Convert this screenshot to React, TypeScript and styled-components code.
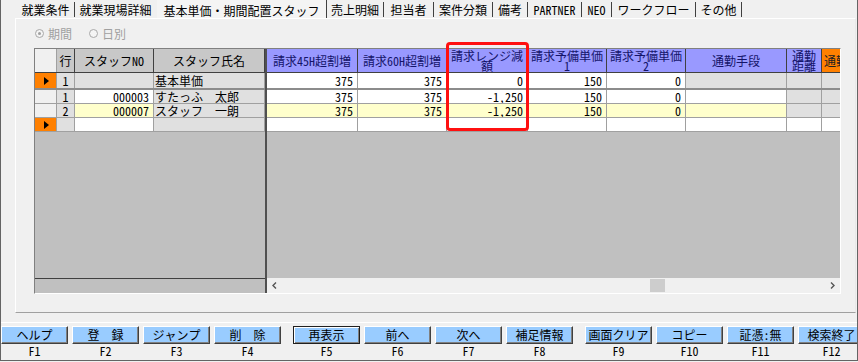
import React from 'react';
import styled, { createGlobalStyle } from 'styled-components';

const FONT = `"Noto Sans Mono CJK JP", "Noto Sans CJK JP", "DejaVu Sans Mono", monospace`;

const GRAY_H = '#c8c8c8';
const GRAY_C = '#e0e0e0';
const BLUE_H = '#9999ff';
const ORANGE = '#ff8000';
const YELLOW = '#ffffcc';
const WHITE = '#ffffff';

const GlobalStyle = createGlobalStyle`
  html, body { margin: 0; padding: 0; background: #f0f0f0; }
  body { font-family: ${FONT}; font-size: 12px; color: #000; }
  *, *::before, *::after { box-sizing: border-box; }
`;

const Window = styled.div`
  width: 858px;
  height: 361px;
  background: #f0f0f0;
  border: 1px solid #646464;
  border-top: none;
  display: flex;
  flex-direction: column;
  overflow: hidden;
`;

const TabStrip = styled.div`
  flex: none;
  height: 18px;
  display: flex;
  align-items: flex-end;
  padding-left: 16px;
`;

const Tab = styled.div<{ $w: number; $active?: boolean; $noBar?: boolean }>`
  flex: none;
  width: ${(p) => p.$w}px;
  height: ${(p) => (p.$active ? 18 : 15)}px;
  padding-top: ${(p) => (p.$active ? 3 : 0)}px;
  line-height: 15px;
  text-align: center;
  white-space: nowrap;
  border-right: 1px solid ${(p) => (p.$noBar ? 'transparent' : '#404040')};
  background: ${(p) => (p.$active ? '#f4f4f4' : 'transparent')};
  margin-bottom: ${(p) => (p.$active ? 0 : 1)}px;
`;

const Panel = styled.div`
  flex: none;
  height: 295px;
  margin: 0 1px 0 14px;
  border-top: 1px solid #ffffff;
  border-left: 1px solid #ffffff;
  border-right: 1px solid #e8e8e8;
  border-bottom: 1px solid #a0a0a0;
  padding: 8px 0 0 18px;
  display: flex;
  flex-direction: column;
`;

const RadioRow = styled.div`
  flex: none;
  height: 13px;
  margin-left: 1px;
  display: flex;
  align-items: center;
  gap: 17px;
  color: #a0a0a0;
  line-height: 13px;
`;

const RadioItem = styled.div`
  display: flex;
  align-items: center;
  gap: 4px;
`;

const RadioCircle = styled.span<{ $checked?: boolean }>`
  width: 9px;
  height: 9px;
  border-radius: 50%;
  border: 1px solid #a8a8a8;
  background: #f4f4f4;
  display: flex;
  align-items: center;
  justify-content: center;
  &::after {
    content: '';
    width: 3px;
    height: 3px;
    border-radius: 50%;
    background: ${(p) => (p.$checked ? '#a0a0a0' : 'transparent')};
  }
`;

const GridFrame = styled.div`
  flex: none;
  position: relative;
  margin-top: 8px;
  width: 807px;
  height: 246px;
  border: 1px solid;
  border-color: #808080 #ffffff #ffffff #808080;
  display: flex;
`;

const FrozenPane = styled.div`
  flex: none;
  width: 232px;
  border-right: 2px solid #505050;
  display: flex;
  flex-direction: column;
`;

const ScrollPane = styled.div`
  flex: 1;
  min-width: 0;
  overflow: hidden;
  display: flex;
  flex-direction: column;
`;

const HeaderRow = styled.div`
  flex: none;
  height: 24px;
  display: flex;
  border-bottom: 1px solid #404040;
`;

const DataRow = styled.div<{ $h: number; $last?: boolean }>`
  flex: none;
  height: ${(p) => p.$h}px;
  display: flex;
  border-bottom: ${(p) => (p.$last ? 'none' : '1px solid #a0a0a0')};
`;

const FrozenSeparator = styled.div`
  flex: none;
  height: 2px;
  background: #8c8c8c;
`;

const Filler = styled.div`
  flex: 1;
  background: #c0c0c0;
`;

const FrozenFoot = styled.div`
  flex: none;
  height: 15px;
  border-top: 1px solid #404040;
  background: #c0c0c0;
`;

const HeaderCell = styled.div<{ $w: number; $bg: string; $color: string; $left?: boolean; $light?: boolean }>`
  flex: none;
  width: ${(p) => p.$w}px;
  height: 100%;
  background: ${(p) => p.$bg};
  color: ${(p) => p.$color};
  border-right: 1px solid ${(p) => (p.$light ? '#a0a0a0' : '#404040')};
  display: flex;
  align-items: center;
  justify-content: ${(p) => (p.$left ? 'flex-start' : 'center')};
  text-align: center;
  padding: 0 2px;
  line-height: 10px;
  overflow: hidden;
  white-space: ${(p) => (p.$left ? 'nowrap' : 'normal')};
  word-break: break-all;
`;

const DataCell = styled.div<{ $w: number; $bg: string; $align: 'left' | 'right' | 'center' }>`
  flex: none;
  width: ${(p) => p.$w}px;
  height: 100%;
  background: ${(p) => p.$bg};
  border-right: 1px solid #a0a0a0;
  display: flex;
  align-items: center;
  justify-content: ${(p) =>
    p.$align === 'right' ? 'flex-end' : p.$align === 'center' ? 'center' : 'flex-start'};
  padding: 0 ${(p) => (p.$align === 'right' ? 4 : 1)}px 0 1px;
  line-height: 13px;
  white-space: nowrap;
  overflow: hidden;
`;

const RowMarker = styled.span`
  width: 0;
  height: 0;
  border-top: 4px solid transparent;
  border-bottom: 4px solid transparent;
  border-left: 5px solid #000;
  margin-left: 2px;
`;

const ScrollBar = styled.div`
  flex: none;
  height: 15px;
  display: flex;
  background: #f0f0f0;
`;

const ArrowBtn = styled.div`
  flex: none;
  width: 15px;
  height: 100%;
  display: flex;
  align-items: center;
  justify-content: center;
`;

const Track = styled.div`
  flex: 1;
  display: flex;
  align-items: center;
`;

const Thumb = styled.div<{ $offset: number }>`
  flex: none;
  margin-left: ${(p) => p.$offset}px;
  width: 15px;
  height: 13px;
  background: #cdcdcd;
`;

const Highlight = styled.div`
  position: absolute;
  left: 411px;
  top: -7px;
  width: 83px;
  height: 89px;
  border: 3px solid #ff1010;
  border-radius: 4px;
  pointer-events: none;
`;

const FooterBar = styled.div`
  flex: none;
  margin-top: 9px;
  border-top: 1px solid #ffffff;
  padding-top: 3px;
  display: flex;
  gap: 12px;
`;

const FGroup = styled.div`
  display: flex;
  gap: 4px;
`;

const FKey = styled.div`
  flex: none;
  width: 67px;
  display: flex;
  flex-direction: column;
  align-items: center;
`;

const FButton = styled.div<{ $focused?: boolean }>`
  width: 100%;
  height: 18px;
  background: #99ccff;
  border: 1px solid;
  border-color: ${(p) => (p.$focused ? '#202020' : '#ffffff #404040 #404040 #ffffff')};
  box-shadow: ${(p) => (p.$focused ? 'inset 1px 1px #ffffff, inset -1px -1px #808080' : 'inset -1px -1px #808080')};
  display: flex;
  align-items: center;
  justify-content: center;
  line-height: 14px;
  white-space: nowrap;
`;

const FLabel = styled.div`
  height: 13px;
  line-height: 13px;
  font-size: 12px;
`;

type Align = 'left' | 'right' | 'center';
type Col = { key: string; w: number; label: string; hbg: string; hcolor: string; align: Align; hLeft?: boolean };

const FROZEN: Col[] = [
  { key: 'sel', w: 22, label: '', hbg: '#f0f0f0', hcolor: '#000', align: 'center' },
  { key: 'gyo', w: 18, label: '行', hbg: GRAY_H, hcolor: '#000', align: 'center' },
  { key: 'no', w: 79, label: 'スタッフNO', hbg: GRAY_H, hcolor: '#000', align: 'right' },
  { key: 'name', w: 111, label: 'スタッフ氏名', hbg: GRAY_H, hcolor: '#000', align: 'left' },
];

const NAVY = '#14146a';
const SCROLL: Col[] = [
  { key: 'h45', w: 91, label: '請求45H超割増', hbg: BLUE_H, hcolor: NAVY, align: 'right' },
  { key: 'h60', w: 89, label: '請求60H超割増', hbg: BLUE_H, hcolor: NAVY, align: 'right' },
  { key: 'range', w: 81, label: '請求レンジ減額', hbg: BLUE_H, hcolor: NAVY, align: 'right' },
  { key: 'y1', w: 79, label: '請求予備単価1', hbg: BLUE_H, hcolor: NAVY, align: 'right' },
  { key: 'y2', w: 79, label: '請求予備単価2', hbg: BLUE_H, hcolor: NAVY, align: 'right' },
  { key: 'commute', w: 101, label: '通勤手段', hbg: BLUE_H, hcolor: NAVY, align: 'left' },
  { key: 'dist', w: 35, label: '通勤距離', hbg: BLUE_H, hcolor: NAVY, align: 'right' },
  { key: 'fare', w: 60, label: '通勤費', hbg: ORANGE, hcolor: '#202020', align: 'right', hLeft: true },
];

type Row = {
  h: number;
  marker: boolean;
  tone: string;
  gray: string[];
  values: Record<string, string>;
  last?: boolean;
};

const ROWS: Row[] = [
  {
    h: 15,
    marker: true,
    tone: WHITE,
    gray: ['gyo', 'no', 'name', 'commute', 'dist', 'fare'],
    values: { gyo: '1', name: '基本単価', h45: '375', h60: '375', range: '0', y1: '150', y2: '0' },
    last: true,
  },
  {
    h: 14,
    marker: false,
    tone: WHITE,
    gray: ['gyo', 'name', 'dist', 'fare'],
    values: { gyo: '1', no: '000003', name: 'すたっふ　太郎', h45: '375', h60: '375', range: '-1,250', y1: '150', y2: '0' },
  },
  {
    h: 14,
    marker: false,
    tone: YELLOW,
    gray: ['gyo', 'name', 'dist', 'fare'],
    values: { gyo: '2', no: '000007', name: 'スタッフ　一朗', h45: '375', h60: '375', range: '-1,250', y1: '150', y2: '0' },
  },
  {
    h: 14,
    marker: true,
    tone: WHITE,
    gray: ['gyo', 'name'],
    values: {},
  },
];

const TABS = [
  { label: '就業条件', w: 58 },
  { label: '就業現場詳細', w: 82, noBar: true },
  { label: '基本単価・期間配置スタッフ', w: 170, active: true },
  { label: '売上明細', w: 57 },
  { label: '担当者', w: 50 },
  { label: '案件分類', w: 59 },
  { label: '備考', w: 35 },
  { label: 'PARTNER', w: 54 },
  { label: 'NEO', w: 30 },
  { label: 'ワークフロー', w: 84 },
  { label: 'その他', w: 46 },
];

const FKEYS = [
  [
    { label: 'ヘルプ', key: 'F1' },
    { label: '登　録', key: 'F2' },
    { label: 'ジャンプ', key: 'F3' },
    { label: '削　除', key: 'F4' },
  ],
  [
    { label: '再表示', key: 'F5', focused: true },
    { label: '前へ', key: 'F6' },
    { label: '次へ', key: 'F7' },
    { label: '補足情報', key: 'F8' },
  ],
  [
    { label: '画面クリア', key: 'F9' },
    { label: 'コピー', key: 'F10' },
    { label: '証憑:無', key: 'F11' },
    { label: '検索終了', key: 'F12' },
  ],
];

const Chevron = ({ dir }: { dir: 'left' | 'right' }) => (
  <svg width="5" height="7" viewBox="0 0 5 7">
    <polyline
      points={dir === 'left' ? '4,0.5 1,3.5 4,6.5' : '1,0.5 4,3.5 1,6.5'}
      fill="none"
      stroke="#555"
      strokeWidth="1.4"
    />
  </svg>
);

function cellBg(row: Row, key: string): string {
  if (key === 'sel') return row.marker ? ORANGE : '#f0f0f0';
  return row.gray.includes(key) ? GRAY_C : row.tone;
}

function renderRow(row: Row, cols: Col[], i: number) {
  return (
    <DataRow key={i} $h={row.h} $last={row.last}>
      {cols.map((c) => (
        <DataCell key={c.key} $w={c.w} $bg={cellBg(row, c.key)} $align={c.align}>
          {c.key === 'sel' ? row.marker ? <RowMarker /> : null : row.values[c.key] ?? ''}
        </DataCell>
      ))}
    </DataRow>
  );
}

function Pane({ cols }: { cols: Col[] }) {
  return (
    <>
      <HeaderRow>
        {cols.map((c) => (
          <HeaderCell
            key={c.key}
            $w={c.w}
            $bg={c.hbg}
            $color={c.hcolor}
            $left={c.hLeft}
            $light={c.key === 'sel'}
          >
            {c.label}
          </HeaderCell>
        ))}
      </HeaderRow>
      {renderRow(ROWS[0], cols, 0)}
      <FrozenSeparator />
      {ROWS.slice(1).map((r, i) => renderRow(r, cols, i + 1))}
      <Filler />
    </>
  );
}

export default function App() {
  return (
    <>
      <GlobalStyle />
      <Window>
        <TabStrip>
          {TABS.map((t) => (
            <Tab key={t.label} $w={t.w} $active={t.active} $noBar={t.noBar}>
              {t.label}
            </Tab>
          ))}
        </TabStrip>
        <Panel>
          <RadioRow>
            <RadioItem>
              <RadioCircle $checked />
              期間
            </RadioItem>
            <RadioItem>
              <RadioCircle />
              日別
            </RadioItem>
          </RadioRow>
          <GridFrame>
            <FrozenPane>
              <Pane cols={FROZEN} />
              <FrozenFoot />
            </FrozenPane>
            <ScrollPane>
              <Pane cols={SCROLL} />
              <ScrollBar>
                <ArrowBtn>
                  <Chevron dir="left" />
                </ArrowBtn>
                <Track>
                  <Thumb $offset={368} />
                </Track>
                <ArrowBtn>
                  <Chevron dir="right" />
                </ArrowBtn>
              </ScrollBar>
            </ScrollPane>
            <Highlight />
          </GridFrame>
        </Panel>
        <FooterBar>
          {FKEYS.map((g, gi) => (
            <FGroup key={gi}>
              {g.map((k) => (
                <FKey key={k.key}>
                  <FButton $focused={k.focused}>{k.label}</FButton>
                  <FLabel>{k.key}</FLabel>
                </FKey>
              ))}
            </FGroup>
          ))}
        </FooterBar>
      </Window>
    </>
  );
}
